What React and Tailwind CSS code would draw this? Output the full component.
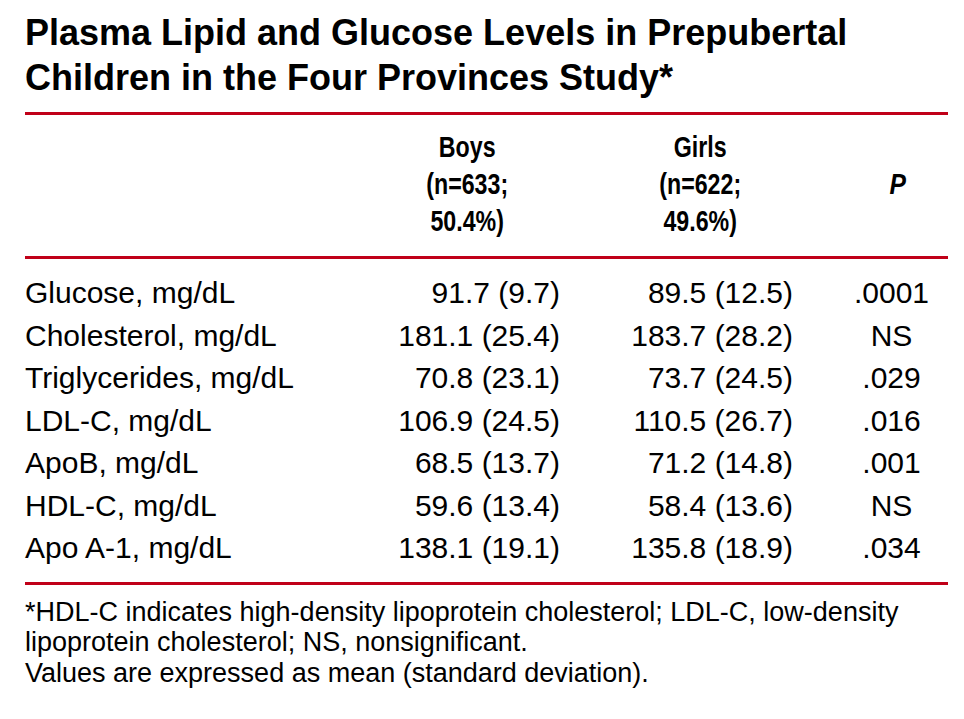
import React from "react";

const rows = [
  ["Glucose, mg/dL", "91.7 (9.7)", "89.5 (12.5)", ".0001"],
  ["Cholesterol, mg/dL", "181.1 (25.4)", "183.7 (28.2)", "NS"],
  ["Triglycerides, mg/dL", "70.8 (23.1)", "73.7 (24.5)", ".029"],
  ["LDL-C, mg/dL", "106.9 (24.5)", "110.5 (26.7)", ".016"],
  ["ApoB, mg/dL", "68.5 (13.7)", "71.2 (14.8)", ".001"],
  ["HDL-C, mg/dL", "59.6 (13.4)", "58.4 (13.6)", "NS"],
  ["Apo A-1, mg/dL", "138.1 (19.1)", "135.8 (18.9)", ".034"],
];

// condensed bold column head
function Head({ lines }) {
  return (
    <div className="flex flex-col items-center">
      <div className="scale-x-[0.8] origin-center text-center">
        {lines.map((l) => (
          <div key={l}>{l}</div>
        ))}
      </div>
    </div>
  );
}

export default function App() {
  return (
    <div className="w-[964px] h-[719px] bg-white text-black pl-[25px] pr-[16px] pt-[10px] font-['Liberation_Sans',Arial,sans-serif]">
      {/* Title */}
      <h1 className="font-bold text-[36px] leading-[45px]">
        Plasma Lipid and Glucose Levels in Prepubertal
        <br />
        Children in the Four Provinces Study*
      </h1>

      <div className="mt-[12px] h-[3px] bg-[#c00018]" />

      {/* Column heads */}
      <div className="grid grid-cols-[350px_185px_233px_155px] pt-[14px] pb-[16px] text-[29px] leading-[37px] font-bold">
        <div />
        <Head lines={["Boys", "(n=633;", "50.4%)"]} />
        <div className="pl-[48px]">
          <Head lines={["Girls", "(n=622;", "49.6%)"]} />
        </div>
        <div className="pl-[54px] flex items-center justify-center">
          <span className="italic scale-x-[0.85]">P</span>
        </div>
      </div>

      <div className="h-[3px] bg-[#c00018]" />

      {/* Data rows */}
      <div className="pt-[13px] pb-[12px] text-[30px]">
        {rows.map((r) => (
          <div
            key={r[0]}
            className="grid grid-cols-[350px_185px_233px_155px] h-[42.5px] items-center leading-none"
          >
            <div>{r[0]}</div>
            <div className="text-right">{r[1]}</div>
            <div className="text-right">{r[2]}</div>
            <div className="pl-[42px] text-center">{r[3]}</div>
          </div>
        ))}
      </div>

      <div className="h-[3px] bg-[#c00018]" />

      {/* Footnotes */}
      <div className="pt-[12px] text-[27px] leading-[30.5px]">
        <p>
          *HDL-C indicates high-density lipoprotein cholesterol; LDL-C, low-density
          <br />
          lipoprotein cholesterol; NS, nonsignificant.
        </p>
        <p>Values are expressed as mean (standard deviation).</p>
      </div>
    </div>
  );
}
